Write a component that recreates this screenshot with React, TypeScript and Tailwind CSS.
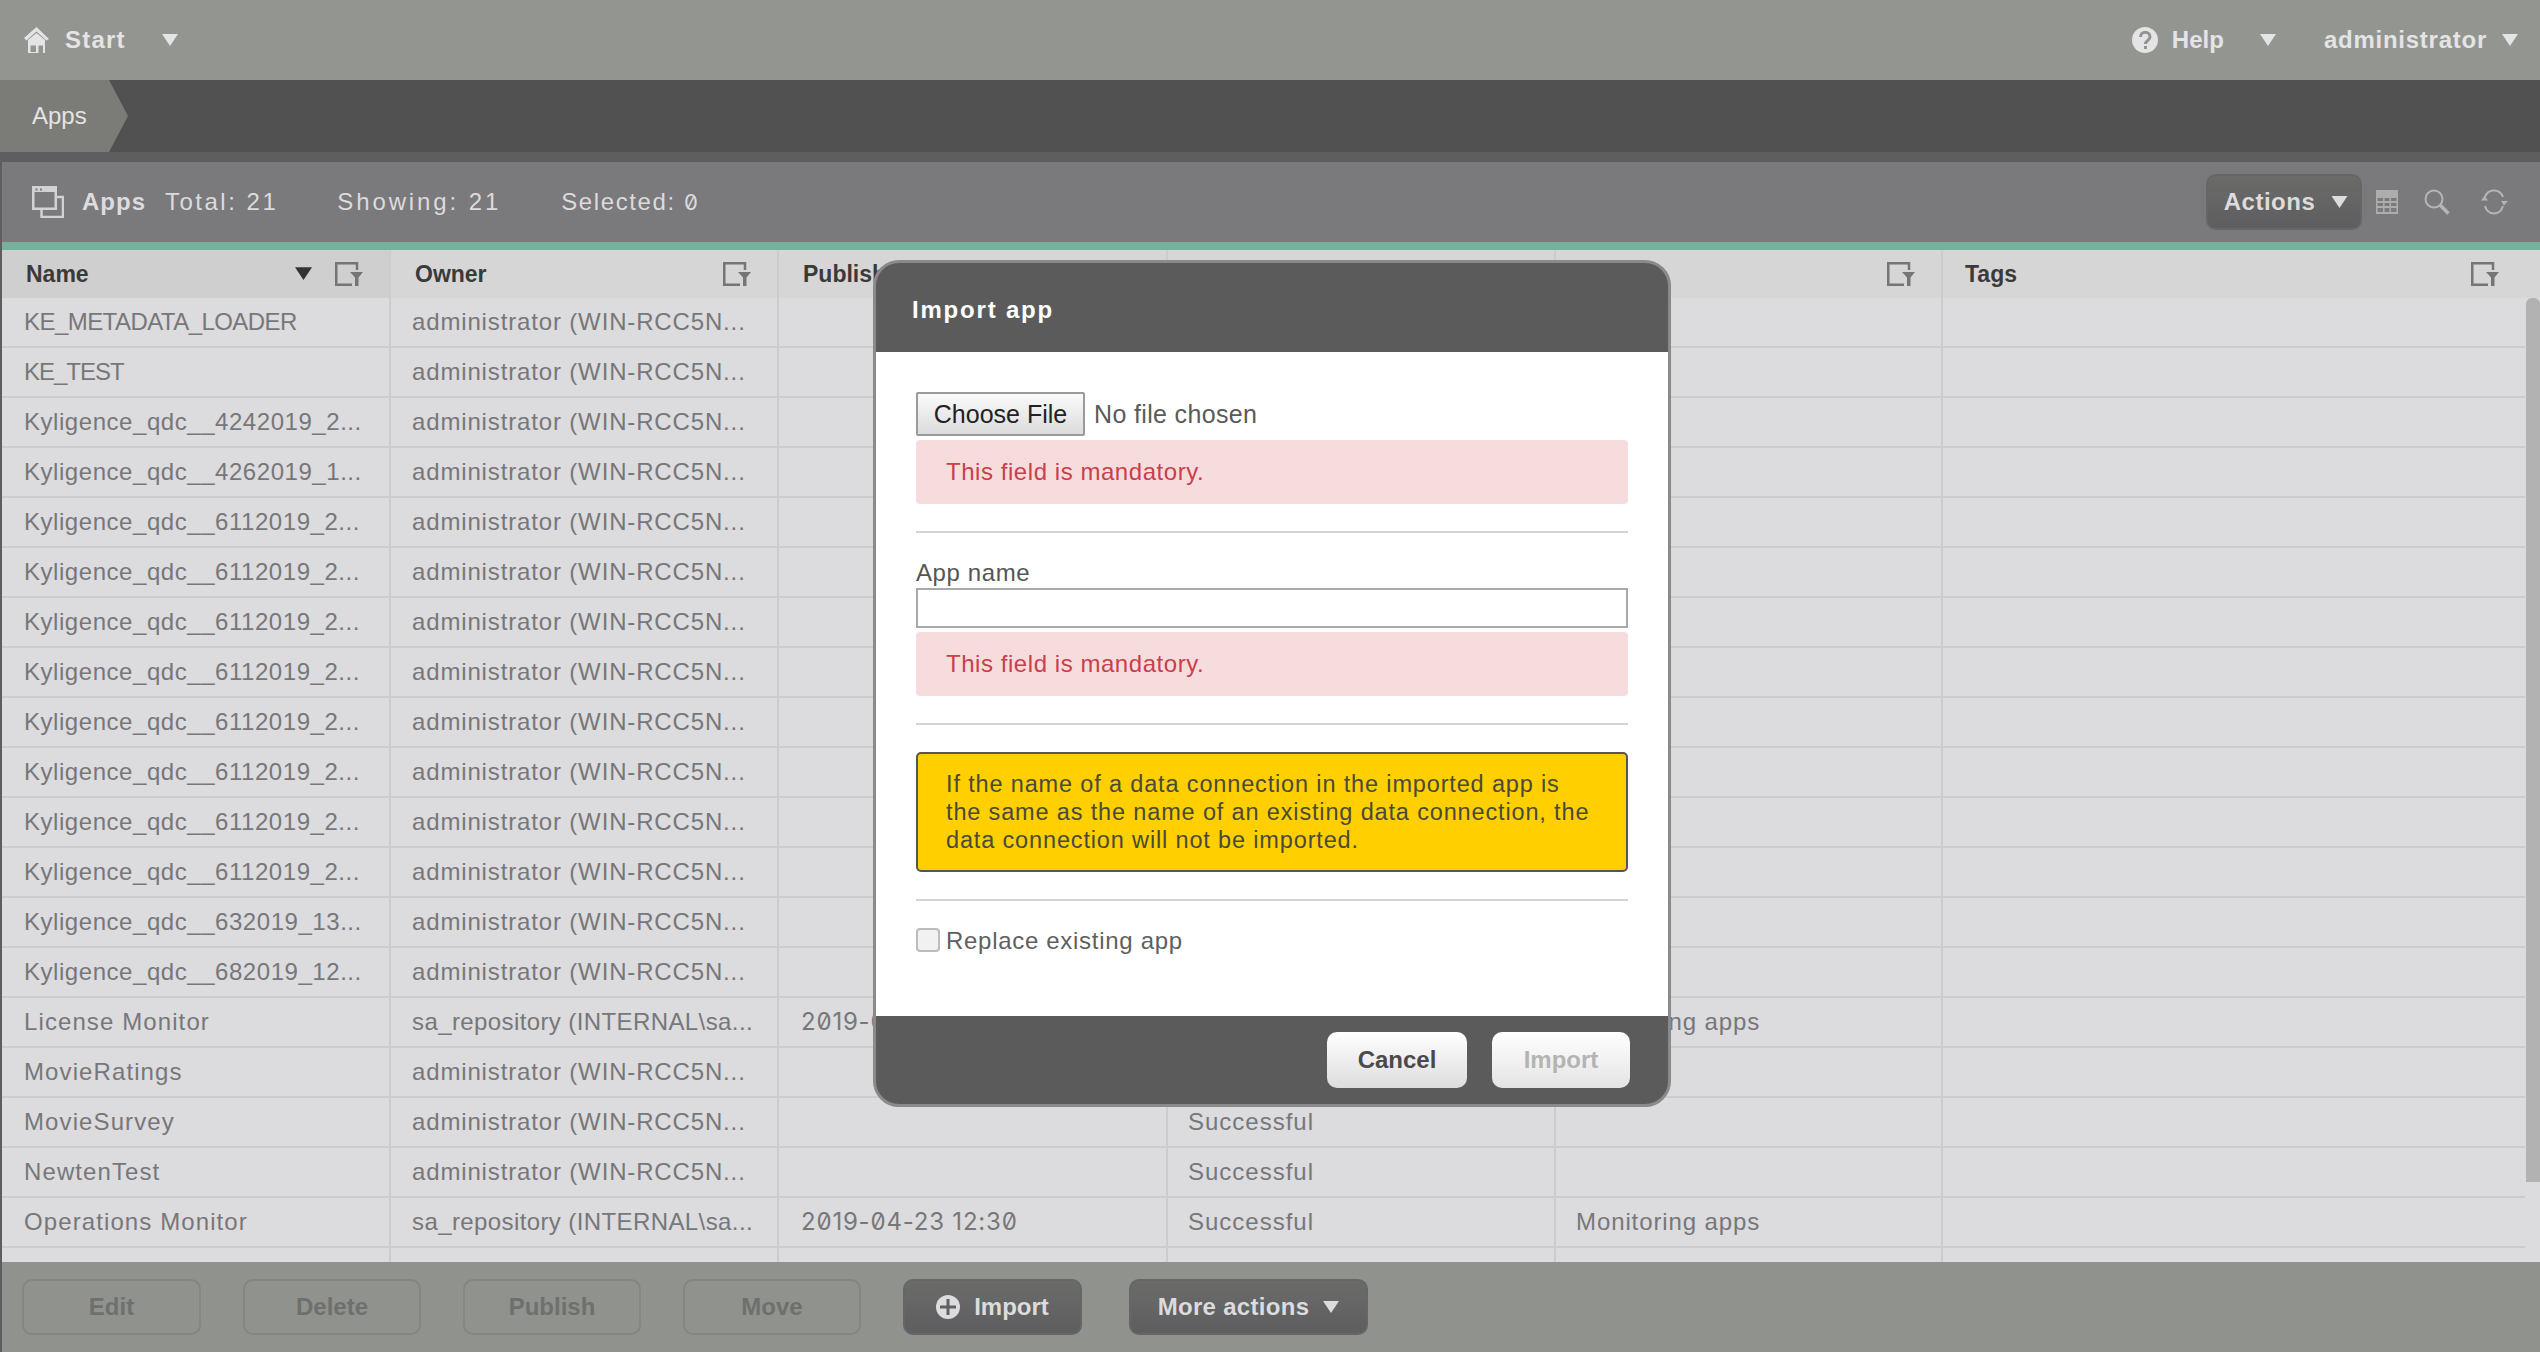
import React from "react";

const Caret = ({ className = "" }: { className?: string }) => (
  <svg viewBox="0 0 16 12" className={className} fill="currentColor"><path d="M0 0H16L8 12Z" /></svg>
);

const FilterIcon = () => (
  <svg viewBox="0 0 28 24" className="w-[28px] h-[24px] text-[#757575]" fill="none">
    <path d="M22 8V1.25H1.25V22.75H17" stroke="currentColor" strokeWidth="2.5" />
    <path d="M15 10H28L23.5 15.5V24H20V15.5Z" fill="currentColor" />
  </svg>
);

const cols = ["w-[389px]", "w-[388px]", "w-[389px]", "w-[388px]", "w-[387px]"];
const admin = "administrator (WIN-RCC5N...";
const sa = "sa_repository (INTERNAL\\sa...";
const K6 = "Kyligence_qdc__6112019_2...";
const date = "2019-04-23 12:30";

type Row = { name: string; nameClass: string; owner: string; date?: string; status?: string; stream?: string };
const KY = "tracking-[0.55px]";
const W = "tracking-[1.1px]";
const rows: Row[] = [
  { name: "KE_METADATA_LOADER", nameClass: "tracking-[-0.55px]", owner: admin },
  { name: "KE_TEST", nameClass: "tracking-[-1px]", owner: admin },
  { name: "Kyligence_qdc__4242019_2...", nameClass: KY, owner: admin },
  { name: "Kyligence_qdc__4262019_1...", nameClass: KY, owner: admin },
  { name: K6, nameClass: KY, owner: admin },
  { name: K6, nameClass: KY, owner: admin },
  { name: K6, nameClass: KY, owner: admin },
  { name: K6, nameClass: KY, owner: admin },
  { name: K6, nameClass: KY, owner: admin },
  { name: K6, nameClass: KY, owner: admin },
  { name: K6, nameClass: KY, owner: admin },
  { name: K6, nameClass: KY, owner: admin },
  { name: "Kyligence_qdc__632019_13...", nameClass: KY, owner: admin },
  { name: "Kyligence_qdc__682019_12...", nameClass: KY, owner: admin },
  { name: "License Monitor", nameClass: W, owner: sa, date, stream: "Monitoring apps" },
  { name: "MovieRatings", nameClass: W, owner: admin },
  { name: "MovieSurvey", nameClass: W, owner: admin, status: "Successful" },
  { name: "NewtenTest", nameClass: W, owner: admin, status: "Successful" },
  { name: "Operations Monitor", nameClass: W, owner: sa, date, status: "Successful", stream: "Monitoring apps" },
  { name: "", nameClass: W, owner: sa },
];

const Header = ({ label, width, dark, sort, hideIcon }: { label: string; width: string; dark?: boolean; sort?: boolean; hideIcon?: boolean }) => (
  <div className={`${width} h-full shrink-0 flex items-center pl-[24px] pr-[26px] border-r-2 border-[#cccccc] ${dark ? "bg-[#cfcfcf]" : ""}`}>
    <span className="flex-1 font-bold text-[#3a3a3a] text-[23px] whitespace-nowrap">{label}</span>
    {sort && <Caret className="w-[17px] h-[13px] text-[#333333] mr-[23px] -mt-[2px]" />}
    {!hideIcon && <FilterIcon />}
  </div>
);

const Cell = ({ width, className = "", children }: { width: string; className?: string; children?: React.ReactNode }) => (
  <div className={`${width} shrink-0 flex items-center border-r-2 border-[#cccccc] whitespace-nowrap overflow-hidden ${className}`}>{children}</div>
);

const PageButton = ({ children, active, width }: { children: React.ReactNode; active?: boolean; width: string }) => (
  <div
    className={`${width} h-[56px] rounded-[10px] border-2 flex items-center justify-center gap-[14px] font-bold text-[24px] ${
      active
        ? "bg-gradient-to-b from-[#6a6c69] to-[#5e5d60] border-[#666666] text-[#dcdbdd]"
        : "border-[#848682] text-[#6e706d]"
    }`}
  >
    {children}
  </div>
);

const Mandatory = () => (
  <div className="mt-[4px] h-[64px] bg-[#f7dcde] rounded-[4px] pl-[30px] flex items-center text-[#c8404a] text-[24px] tracking-[0.55px]">
    This field is mandatory.
  </div>
);

export default function App() {
  return (
    <div className="relative w-[2540px] h-[1352px] overflow-hidden flex flex-col bg-[#5e5d60] font-['Liberation_Sans',Arial,sans-serif] text-[24px]">
      {/* top bar */}
      <div className="h-[80px] shrink-0 bg-[#939591] flex items-center text-[#e4e3e5] font-bold pl-[24px] pr-[22px]">
        <svg viewBox="0 0 25 26" className="w-[25px] h-[26px]" fill="currentColor">
          <path d="M0 11L12.5 0L25 12L22.5 13.5L12.5 4.5L2.5 13.5Z" />
          <path fillRule="evenodd" d="M4 13L12.5 6L21 13V26H4Z M6.5 18.5V25H12V18.5Z M14.5 18.5V26H19V18.5Z" />
        </svg>
        <span className="ml-[16px] tracking-[1.2px]">Start</span>
        <Caret className="w-[16px] h-[12px] ml-[36px]" />
        <div className="flex-1" />
        <svg viewBox="0 0 26 26" className="w-[26px] h-[26px]">
          <circle cx="13" cy="13" r="13" fill="currentColor" />
          <path d="M8.5 10C8.5 3.5 18 3.5 18 10C18 13.5 13.5 13.5 13.5 17" fill="none" stroke="#939591" strokeWidth="3" />
          <rect x="12" y="19" width="3" height="3" fill="#939591" />
        </svg>
        <span className="ml-[14px]">Help</span>
        <Caret className="w-[16px] h-[12px] ml-[36px]" />
        <span className="ml-[48px] tracking-[0.75px]">administrator</span>
        <Caret className="w-[16px] h-[12px] ml-[15px]" />
      </div>

      {/* breadcrumb */}
      <div className="h-[72px] shrink-0 bg-[#515151] flex">
        <div className="w-[128px] h-full bg-[#7b7c78] [clip-path:polygon(0_0,109px_0,128px_50%,109px_100%,0_100%)] flex items-center pl-[32px] text-[#e4e3e5]">
          Apps
        </div>
      </div>

      {/* panel */}
      <div className="flex-1 min-h-0 flex flex-col pt-[10px] pl-[2px]">
        <div className="h-[80px] shrink-0 bg-[#7a797c] flex items-center pl-[30px] pr-[32px] text-[#dcdbdd]">
          <svg viewBox="0 0 32 32" className="w-[32px] h-[32px] text-[#d2d2d4]" fill="none">
            <path d="M9.5 11H31V31H9.5Z" stroke="currentColor" strokeWidth="2.5" />
            <path d="M1.25 1.25H23.75V22.75H1.25Z" fill="#7a797c" stroke="currentColor" strokeWidth="2.5" />
            <path d="M1 1H24V6H1Z" fill="currentColor" />
            <path d="M3.5 2.5H5.5V4.5H3.5Z M8 2.5H10V4.5H8Z" fill="#7a797c" />
          </svg>
          <span className="ml-[18px] font-bold tracking-[1px]">Apps</span>
          <span className="ml-[19px] tracking-[2.5px]">Total: 21</span>
          <span className="ml-[59px] tracking-[2.9px]">Showing: 21</span>
          <span className="ml-[60px] tracking-[1.6px]">
            Selected: <span className="font-['Inter',sans-serif] text-[22px] [font-feature-settings:'zero']">0</span>
          </span>
          <div className="flex-1" />
          <div className="w-[156px] h-[56px] rounded-[10px] border-2 border-[#666666] bg-gradient-to-b from-[#6a6c69] to-[#5e5d60] flex items-center justify-center gap-[16px] pl-[4px] font-bold text-[#dcdbdd] tracking-[0.5px]">
            Actions
            <Caret className="w-[17px] h-[12px]" />
          </div>
          <svg viewBox="0 0 22 24" className="ml-[14px] w-[22px] h-[24px] text-[#adadad]" fill="currentColor">
            <path d="M0 0H22V24H0Z M1.5 8V11H7V8Z M8.5 8V11H13.5V8Z M15 8V11H20.5V8Z M1.5 13V16H7V13Z M8.5 13V16H13.5V13Z M15 13V16H20.5V13Z M1.5 18V22H7V18Z M8.5 18V22H13.5V18Z M15 18V22H20.5V18Z" fillRule="evenodd" />
          </svg>
          <svg viewBox="0 0 26 26" className="ml-[26px] w-[26px] h-[26px] text-[#b5b5b5]" fill="none" stroke="currentColor" strokeWidth="2">
            <circle cx="10" cy="10" r="8.5" />
            <path d="M16 16L24.5 24.5" strokeWidth="3.5" />
          </svg>
          <svg viewBox="0 0 28 26" className="ml-[30px] w-[28px] h-[26px] text-[#b5b5b5]" fill="none" stroke="currentColor" strokeWidth="2">
            <path d="M5 8C6.5 3.5 10 1.5 14 1.5C18 1.5 21.5 4 23 8" />
            <path d="M23 17C21.5 22 18 24.5 14 24.5C10 24.5 6.5 22 5 17" />
            <path d="M21 12H28L24 16.5Z M1 11.5L4.5 7L8 11.5Z" fill="currentColor" stroke="none" />
          </svg>
        </div>
        <div className="h-[8px] shrink-0 bg-[#75b19d]" />

        {/* table header */}
        <div className="h-[48px] shrink-0 bg-[#d6d6d6] flex">
          <Header label="Name" width={cols[0]} dark sort />
          <Header label="Owner" width={cols[1]} />
          <Header label="Publish time" width={cols[2]} hideIcon />
          <Header label="Migration status" width={cols[3]} hideIcon />
          <Header label="Stream" width={cols[4]} />
          <div className="flex-1 flex items-center pl-[22px] pr-[41px]">
            <span className="flex-1 font-bold text-[#3a3a3a] text-[23px]">Tags</span>
            <FilterIcon />
          </div>
        </div>

        {/* table body */}
        <div className="flex-1 min-h-0 flex bg-[#dcdbdd] overflow-hidden">
          <div className="flex-1 min-w-0 flex flex-col text-[#77777a]">
            {rows.map((r, i) => (
              <div key={i} className="h-[50px] shrink-0 flex border-b-2 border-[#cccccc]">
                <Cell width={cols[0]} className={`pl-[22px] ${r.nameClass}`}>{r.name}</Cell>
                <Cell width={cols[1]} className={`pl-[21px] ${r.owner === sa ? "tracking-[0.4px]" : "tracking-[0.85px]"}`}>{r.owner}</Cell>
                <Cell width={cols[2]} className="pl-[22px] font-['Inter',sans-serif] tracking-[0.8px] text-[24px] [font-feature-settings:'zero']">{r.date}</Cell>
                <Cell width={cols[3]} className="pl-[20px] tracking-[1px]">{r.status}</Cell>
                <Cell width={cols[4]} className="pl-[20px] tracking-[0.9px]">{r.stream}</Cell>
                <div className="flex-1 min-w-0" />
              </div>
            ))}
          </div>
          <div className="w-[15px] shrink-0">
            <div className="h-[884px] bg-[#b2b2b2] rounded-t-[6px] ml-[1px]" />
          </div>
        </div>

        {/* footer */}
        <div className="h-[90px] shrink-0 bg-[#90928e] flex items-center pl-[20px] gap-[42px]">
          <PageButton width="w-[179px]">Edit</PageButton>
          <PageButton width="w-[178px]">Delete</PageButton>
          <PageButton width="w-[178px]">Publish</PageButton>
          <PageButton width="w-[178px]">Move</PageButton>
          <PageButton width="w-[179px]" active>
            <svg viewBox="0 0 24 24" className="w-[24px] h-[24px]">
              <circle cx="12" cy="12" r="12" fill="currentColor" />
              <path d="M12 4V20M4 12H20" stroke="#60615f" strokeWidth="3" />
            </svg>
            Import
          </PageButton>
          <div className="ml-[5px]">
            <PageButton width="w-[239px]" active>
              <span className="tracking-[0.3px]">More actions</span>
              <Caret className="w-[16px] h-[12px]" />
            </PageButton>
          </div>
        </div>
      </div>

      {/* dialog */}
      <div className="absolute left-[873px] top-[260px] w-[798px] h-[847px] flex flex-col rounded-[26px] border-[3px] border-[#8a8a8a] bg-[#5b5b5b] overflow-hidden">
        <div className="h-[89px] shrink-0 flex items-center pl-[36px] pt-[5px] font-bold text-white tracking-[1.8px]">Import app</div>
        <div className="flex-1 bg-white px-[40px] pt-[40px] text-[#5a5a5a]">
          <div className="h-[44px] flex items-center">
            <div className="w-[169px] h-[44px] rounded-[2px] border-2 border-[#9a9a9a] bg-gradient-to-b from-[#fafafa] to-[#dcdcdc] flex items-center justify-center text-[#222222] text-[25px] pt-[1px]">
              Choose File
            </div>
            <span className="ml-[9px] text-[25px] text-[#5a5a5a] tracking-[0.35px] pt-[2px]">No file chosen</span>
          </div>
          <Mandatory />
          <div className="mt-[27px] h-[2px] bg-[#d4d4d4]" />
          <div className="h-[55px] flex items-end text-[#555555] tracking-[0.6px]">
            <span className="-mb-[3px]">App name</span>
          </div>
          <div className="h-[40px] border-2 border-[#a9a9a9] bg-white" />
          <Mandatory />
          <div className="mt-[27px] h-[2px] bg-[#d4d4d4]" />
          <div className="mt-[27px] h-[120px] rounded-[5px] border-2 border-[#555555] bg-[#ffcf00] pl-[28px] pt-[16px] leading-[28px] text-[#4a4a3a] text-[23.5px] tracking-[0.85px] whitespace-nowrap">
            If the name of a data connection in the imported app is
            <br />
            the same as the name of an existing data connection, the
            <br />
            data connection will not be imported.
          </div>
          <div className="mt-[27px] h-[2px] bg-[#d4d4d4]" />
          <div className="mt-[27px] h-[24px] flex items-center">
            <div className="w-[24px] h-[24px] rounded-[4px] border-2 border-[#bcbcbc] bg-[#f1f1f1]" />
            <span className="ml-[6px] text-[#5f5f5f] tracking-[0.7px] pt-[2px]">Replace existing app</span>
          </div>
        </div>
        <div className="h-[88px] shrink-0 flex items-center justify-end pr-[38px] gap-[25px] font-bold">
          <div className="w-[140px] h-[56px] rounded-[10px] bg-gradient-to-b from-[#ffffff] to-[#dddddd] flex items-center justify-center text-[#4a4a4a]">Cancel</div>
          <div className="w-[138px] h-[56px] rounded-[10px] bg-gradient-to-b from-[#ffffff] to-[#e4e4e4] flex items-center justify-center text-[#b4b4b4]">Import</div>
        </div>
      </div>
    </div>
  );
}
